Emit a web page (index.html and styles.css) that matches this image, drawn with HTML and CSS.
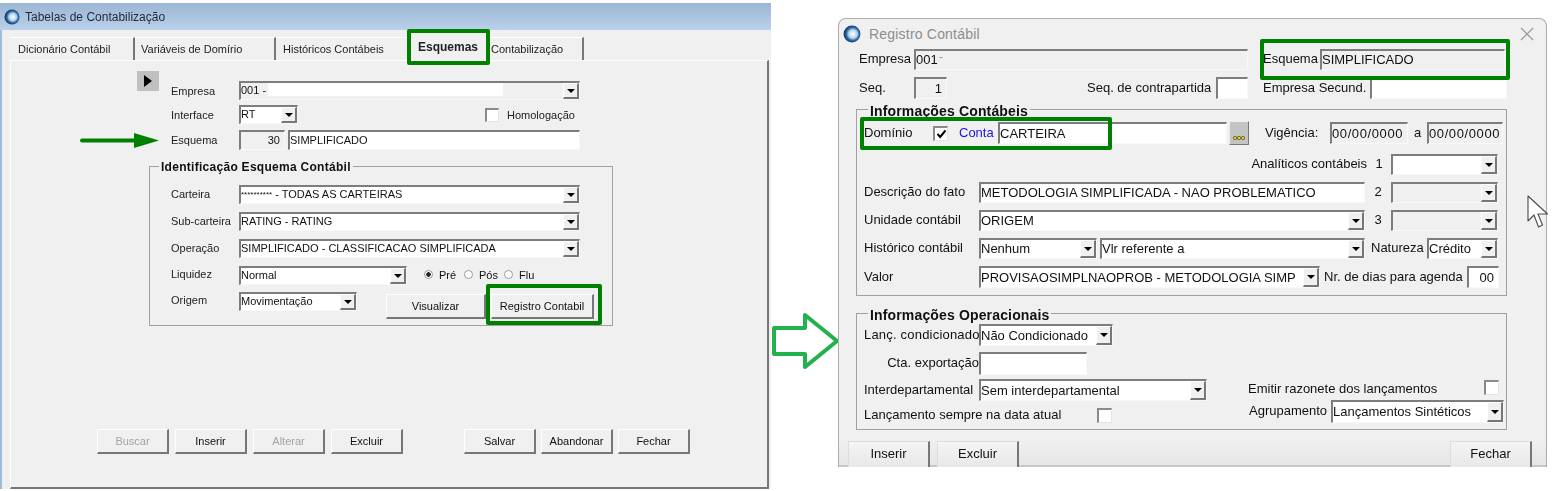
FILE: index.html
```html
<!DOCTYPE html>
<html lang="pt">
<head>
    <meta charset="UTF-8">
    <title>Tabelas de Contabilização</title>
    <link rel="stylesheet" href="styles.css">
</head>
<body>
    <svg width="0" height="0" class="defs">
        <defs>
            <radialGradient id="orb" cx="55%" cy="50%" r="55%">
                <stop offset="0" stop-color="#ffffff"/>
                <stop offset="0.45" stop-color="#b8d4ee"/>
                <stop offset="0.7" stop-color="#2a6aa8"/>
                <stop offset="1" stop-color="#0c2c58"/>
            </radialGradient>
        </defs>
    </svg>

    <!-- janela esquerda -->
    <div class="window tables">
        <div class="titlebar">
            <svg class="logo" width="16" height="16" viewBox="0 0 16 16"><circle cx="8" cy="8" r="7.5" fill="url(#orb)"/></svg>
            <span>Tabelas de Contabilização</span>
        </div>
        <div class="tabs">
            <div class="tab t1">Dicionário Contábil</div>
            <div class="tab t2">Variáveis de Domírio</div>
            <div class="tab t3">Históricos Contábeis</div>
            <div class="tab t4 selected">Esquemas</div>
            <div class="tab t5">Contabilização</div>
        </div>
        <div class="panel">
            <div class="play"><svg width="8" height="12" viewBox="0 0 8 12"><path d="M0 0 L8 6 L0 12 Z" fill="#000"/></svg></div>
            <div class="scheme">
                <div class="row r1">
                    <label class="lab">Empresa</label>
                    <div class="field f341 off">001 -<span class="redact"></span><span class="arrow"></span></div>
                </div>
                <div class="row r2">
                    <label class="lab">Interface</label>
                    <div class="field f59">RT<span class="arrow"></span></div>
                    <div class="check ck-homolog"></div>
                    <label class="homolog">Homologação</label>
                </div>
                <div class="row r3">
                    <label class="lab">Esquema</label>
                    <div class="field f46 off num-right">30</div>
                    <div class="field f292">SIMPLIFICADO</div>
                </div>
            </div>
            <fieldset class="group id-group">
                <legend>Identificação Esquema Contábil</legend>
                <div class="row">
                    <label class="lab">Carteira</label>
                    <div class="field f341"><span class="stars">**********</span>&nbsp;- TODAS AS CARTEIRAS<span class="arrow"></span></div>
                </div>
                <div class="row">
                    <label class="lab">Sub-carteira</label>
                    <div class="field f341">RATING - RATING<span class="arrow"></span></div>
                </div>
                <div class="row">
                    <label class="lab">Operação</label>
                    <div class="field f341">SIMPLIFICADO - CLASSIFICACAO SIMPLIFICADA<span class="arrow"></span></div>
                </div>
                <div class="row tight">
                    <label class="lab">Liquidez</label>
                    <div class="field f168">Normal<span class="arrow"></span></div>
                    <span class="radio on first"></span><label class="rlab">Pré</label>
                    <span class="radio"></span><label class="rlab">Pós</label>
                    <span class="radio"></span><label class="rlab">Flu</label>
                </div>
                <div class="row tight">
                    <label class="lab">Origem</label>
                    <div class="field f118">Movimentação<span class="arrow"></span></div>
                    <div class="btn visualizar">Visualizar</div>
                    <div class="btn registro">Registro Contabil</div>
                </div>
            </fieldset>
            <div class="actions">
                <div class="btn off">Buscar</div>
                <div class="btn">Inserir</div>
                <div class="btn off">Alterar</div>
                <div class="btn">Excluir</div>
                <div class="btn salvar">Salvar</div>
                <div class="btn">Abandonar</div>
                <div class="btn">Fechar</div>
            </div>
        </div>
    </div>

    <div class="mark mark-tab"></div>
    <div class="mark mark-registro"></div>
    <svg class="pointer" width="80" height="16" viewBox="0 0 80 16">
        <path d="M2 7.5 H55" stroke="#008000" stroke-width="4" stroke-linecap="round"/>
        <path d="M54 0 L79 7.5 L54 15 Z" fill="#008000"/>
    </svg>
    <svg class="big-arrow" width="68" height="56" viewBox="0 0 68 56">
        <path d="M2 15 H33 V2 L65 28 L33 54 V41 H2 Z" fill="#fff" stroke="#22b14c" stroke-width="4" stroke-linejoin="round"/>
    </svg>

    <!-- janela direita -->
    <div class="window record">
        <div class="rec-title">
            <svg class="logo" width="18" height="18" viewBox="0 0 16 16"><circle cx="8" cy="8" r="7.5" fill="url(#orb)"/></svg>
            <span>Registro Contábil</span>
            <svg class="close" width="14" height="14" viewBox="0 0 14 14"><path d="M1 1 L13 13 M13 1 L1 13" stroke="#9a9a9a" stroke-width="1.2"/></svg>
        </div>
        <div class="rec-body">
            <div class="rrow top first-top">
                <label class="w55">Empresa</label>
                <div class="field w334 off">001<span class="faint">-</span></div>
                <label class="w57 ml15">Esquema</label>
                <div class="field w185 off">SIMPLIFICADO</div>
            </div>
            <div class="rrow top second-top">
                <label class="w55">Seq.</label>
                <div class="field w33 off num-right">1</div>
                <label class="w129 ml140">Seq. de contrapartida</label>
                <div class="field w32"></div>
                <label class="w107 ml15">Empresa Secund.</label>
                <div class="field w137"></div>
            </div>
            <fieldset class="group rgroup accounting">
                <legend>Informações Contábeis</legend>
                <div class="rrow dominio">
                    <label class="w69">Domínio</label>
                    <div class="check on"><svg width="11" height="10" viewBox="0 0 11 10"><path d="M1.5 5 L4.2 8 L9.5 1.5" fill="none" stroke="#000" stroke-width="2"/></svg></div>
                    <label class="conta">Conta</label>
                    <div class="field w229">CARTEIRA</div>
                    <div class="browse"><svg width="12" height="4" viewBox="0 0 12 4"><circle cx="2" cy="2" r="1.7" fill="#e8d800" stroke="#333" stroke-width=".6"/><circle cx="6" cy="2" r="1.7" fill="#e8d800" stroke="#333" stroke-width=".6"/><circle cx="10" cy="2" r="1.7" fill="#e8d800" stroke="#333" stroke-width=".6"/></svg></div>
                    <label class="w65 ml16">Vigência:</label>
                    <div class="field w78 off date">00/00/0000</div>
                    <label class="w19 center">a</label>
                    <div class="field w76 off date">00/00/0000</div>
                </div>
                <div class="rrow analiticos">
                    <label class="grow right">Analíticos contábeis</label>
                    <label class="w24 center">1</label>
                    <div class="field w107"><span class="arrow"></span></div>
                </div>
                <div class="rrow">
                    <label class="w115">Descrição do fato</label>
                    <div class="field w386">METODOLOGIA SIMPLIFICADA - NAO PROBLEMATICO</div>
                    <label class="w26 center">2</label>
                    <div class="field w107 off"><span class="arrow"></span></div>
                </div>
                <div class="rrow">
                    <label class="w115">Unidade contábil</label>
                    <div class="field w386">ORIGEM<span class="arrow"></span></div>
                    <label class="w26 center">3</label>
                    <div class="field w107 off"><span class="arrow"></span></div>
                </div>
                <div class="rrow">
                    <label class="w115">Histórico contábil</label>
                    <div class="field w118">Nenhum<span class="arrow"></span></div>
                    <div class="field w265 ml3">Vlr referente a<span class="arrow"></span></div>
                    <label class="w56 ml6">Natureza</label>
                    <div class="field w71">Crédito<span class="arrow"></span></div>
                </div>
                <div class="rrow valor">
                    <label class="w115">Valor</label>
                    <div class="field w341">PROVISAOSIMPLNAOPROB - METODOLOGIA SIMP<span class="arrow"></span></div>
                    <label class="w139 ml4">Nr. de dias para agenda</label>
                    <div class="field w32 ml4 num-right">00</div>
                </div>
            </fieldset>
            <fieldset class="group rgroup operational">
                <legend>Informações Operacionais</legend>
                <div class="rrow">
                    <label class="w115 cond">Lanç. condicionado</label>
                    <div class="field w134">Não Condicionado<span class="arrow"></span></div>
                </div>
                <div class="rrow cta">
                    <label class="w115 right">Cta. exportação</label>
                    <div class="field w108"></div>
                </div>
                <div class="rrow inter">
                    <label class="w115">Interdepartamental</label>
                    <div class="field w228">Sem interdepartamental<span class="arrow"></span></div>
                    <div class="emitir">
                        <label class="w236 ml41">Emitir razonete dos lançamentos</label>
                        <div class="check"></div>
                    </div>
                </div>
                <div class="rrow last">
                    <div class="sempre">
                        <label class="w233">Lançamento sempre na data atual</label>
                        <div class="check"></div>
                    </div>
                    <label class="w82 ml137 agrup">Agrupamento</label>
                    <div class="field w173">Lançamentos Sintéticos<span class="arrow"></span></div>
                </div>
            </fieldset>
        </div>
        <div class="rec-foot">
            <div class="fbtn">Inserir</div>
            <div class="fbtn">Excluir</div>
            <div class="fbtn fechar">Fechar</div>
        </div>
    </div>

    <div class="mark mark-esquema"></div>
    <div class="mark mark-conta"></div>
    <svg class="cursor" width="22" height="34" viewBox="0 0 22 34">
        <path d="M1 1 V26 L7 20 L11.5 32 L15.5 30 L11 19 L20.5 19 Z" fill="#fff" stroke="#4a4a4a" stroke-width="1.1" stroke-linejoin="round"/>
    </svg>
</body>
</html>
```

FILE: styles.css
```css
* { box-sizing: border-box; }
body {
    margin: 0;
    width: 1555px;
    height: 491px;
    position: relative;
    overflow: hidden;
    background: #fff;
    font-family: "Liberation Sans", Arial, sans-serif;
    font-size: 11px;
    color: #111;
}
label { white-space: nowrap; }
.defs { position: absolute; }

.window { position: absolute; background: #f0f0f0; filter: blur(.3px); }

/* Tabelas de Contabilização */
.tables {
    left: 0;
    top: 3px;
    width: 771px;
    height: 486px;
    border-left: 2px solid #9fbcdc;
    display: flex;
    flex-direction: column;
}
.titlebar {
    height: 27px;
    margin-left: -2px;
    padding-left: 4px;
    display: flex;
    align-items: center;
    gap: 5px;
    background: linear-gradient(#9cb5d3, #b9d1ea);
    color: #1c2a3a;
    font-size: 12px;
}
.tabs {
    height: 30px;
    padding: 7px 0 0 8px;
    display: flex;
    flex: none;
}
.tab {
    height: 23px;
    border-top: 1px solid #fff;
    border-right: 2px solid #777;
    padding-top: 5px;
    color: #222;
    white-space: nowrap;
}
.t1 { width: 125px; padding-left: 8px; }
.t2 { width: 141px; padding-left: 6px; }
.t3 { width: 132px; padding-left: 7px; border-right: none; }
.t4 { width: 82px; margin-top: -6px; height: 29px; padding: 9px 0 0 10px; font-size: 12px; font-weight: bold; border: none; }
.t5 { width: 94px; padding-left: 1px; }

.panel {
    flex: 1;
    margin-left: 8px;
    width: 759px;
    position: relative;
    border-top: 1px solid #fff;
    border-left: 1px solid #fff;
    border-right: 2px solid #777;
    border-bottom: 2px solid #777;
    display: flex;
    flex-direction: column;
}
.play {
    position: absolute;
    left: 126px;
    top: 10px;
    width: 22px;
    height: 20px;
    background: #c0c0c0;
    display: flex;
    align-items: center;
    justify-content: center;
}
.scheme { padding: 20px 0 0 160px; }

.row { display: flex; align-items: center; height: 19px; }
.r2 { margin-top: 5px; }
.r3 { margin-top: 6px; height: 20px; }
.lab { width: 68px; color: #222; }
.homolog { margin-left: 8px; color: #222; }

.field {
    position: relative;
    height: 100%;
    flex: none;
    padding: 0 0 2px;
    display: flex;
    align-items: center;
    white-space: nowrap;
    overflow: hidden;
    background: #fff;
    border-top: 2px solid #7d7d7d;
    border-left: 2px solid #7d7d7d;
    border-right: 1px solid #f8f8f8;
    border-bottom: 1px solid #f8f8f8;
}
.field.off { background: #f0f0f0; }
.num-right { justify-content: flex-end; padding-right: 4px; }
.redact {
    position: absolute;
    left: 27px;
    top: 0;
    width: 235px;
    height: 13px;
    background: #fff;
}
.arrow {
    position: absolute;
    right: 0;
    top: 0;
    bottom: 0;
    width: 16px;
    background: #f0f0f0;
    border-right: 2px solid #777;
    border-bottom: 2px solid #777;
    border-top: 1px solid #fff;
    border-left: 1px solid #fff;
}
.arrow::after {
    content: "";
    position: absolute;
    left: 50%;
    top: 50%;
    margin: -2px 0 0 -4px;
    border: 4px solid transparent;
    border-top: 4px solid #000;
    border-bottom: none;
}
.f341 { width: 341px; }
.f59 { width: 59px; }
.f46 { width: 46px; }
.f292 { width: 292px; margin-left: 3px; }
.f168 { width: 168px; }
.f118 { width: 118px; }
.stars { font-size: 8px; }

.check {
    width: 15px;
    height: 15px;
    flex: none;
    background: #fff;
    border-top: 2px solid #8a8a8a;
    border-left: 2px solid #8a8a8a;
    border-right: 1px solid #e4e4e4;
    border-bottom: 1px solid #e4e4e4;
    display: flex;
    align-items: center;
    justify-content: center;
}
.ck-homolog { margin-left: 187px; width: 14px; height: 14px; }

.group {
    margin: 0;
    border: 1px solid #a0a0a0;
    min-width: 0;
}
.group legend { font-weight: bold; padding: 0 2px; color: #111; }
.id-group {
    margin: 9px 0 0 138px;
    width: 464px;
    height: 167px;
    padding: 12px 0 0 10px;
}
.id-group legend { height: 14px; line-height: 14px; font-size: 12px; letter-spacing: .28px; position: relative; top: 1px; margin-left: -1px; }
.id-group .row { margin-bottom: 8px; padding-left: 11px; }
.id-group .row.tight { margin-bottom: 7px; align-items: flex-start; }
.radio {
    width: 9px;
    height: 9px;
    border-radius: 50%;
    border: 1px solid #999;
    background: #fff;
    margin: 4px 4px 0 0;
    flex: none;
}
.radio.first { margin-left: 17px; }
.radio.on { background: radial-gradient(circle, #222 0 2px, #fff 2.5px); }
.rlab { width: 27px; margin-top: 1px; padding-left: 2px; }
.rlab:last-child { width: auto; }
.id-group .lab, .rlab { line-height: 17px; }

.btn {
    width: 72px;
    height: 25px;
    flex: none;
    display: flex;
    align-items: center;
    justify-content: center;
    background: #f0f0f0;
    border-top: 1px solid #fff;
    border-left: 1px solid #fff;
    border-right: 2px solid #777;
    border-bottom: 2px solid #777;
    color: #111;
}
.btn.off { color: #a3a3a3; }
.btn.visualizar { width: 100px; margin: 2px 0 0 29px; }
.btn.registro { width: 103px; margin: 2px 0 0 5px; }
.actions {
    margin: auto 0 33px 86px;
    display: flex;
    gap: 6px;
}
.actions .btn:nth-child(n+6) { margin-left: -1px; }
.btn.salvar { margin-left: 55px; }

/* marcações verdes */
.mark {
    position: absolute;
    border: 4px solid #008000;
    border-radius: 2px;
}
.mark-tab { left: 407px; top: 29px; width: 83px; height: 36px; }
.mark-registro { left: 486px; top: 284px; width: 116px; height: 41px; }
.mark-esquema { left: 1260px; top: 39px; width: 250px; height: 41px; }
.mark-conta { left: 860px; top: 117px; width: 252px; height: 33px; }
.pointer { position: absolute; left: 80px; top: 133px; }
.big-arrow { position: absolute; left: 772px; top: 313px; }
.cursor { position: absolute; left: 1527px; top: 195px; }

/* Registro Contábil */
.record {
    left: 838px;
    top: 18px;
    width: 709px;
    height: 449px;
    border: 1px solid #acacac;
    border-bottom: none;
    border-radius: 8px 8px 0 0;
    display: flex;
    flex-direction: column;
    font-size: 13px;
}
.record label { padding-bottom: 2px; }
.record .field { padding-bottom: 1px; }
.rec-title {
    height: 30px;
    flex: none;
    padding-left: 4px;
    display: flex;
    align-items: center;
    gap: 8px;
    color: #8d8d8d;
    font-size: 14px;
    letter-spacing: .2px;
}
.close { margin-left: auto; margin-right: 12px; }
.rec-body { padding-left: 17px; flex: 1; }
.rrow { display: flex; align-items: center; height: 21px; }
.rrow.top .field { height: 100%; }
.first-top { padding-left: 3px; }
.second-top { padding-left: 3px; height: 22px; margin-top: 7px; }
.rgroup { width: 651px; padding: 5px 0 0 7px; }
.rgroup legend { height: 16px; line-height: 16px; margin-left: 4px; font-size: 14px; letter-spacing: .15px; position: relative; top: 2px; }
.accounting { margin-top: 2px; height: 195px; }
.operational { margin-top: 9px; height: 125px; padding-top: 3px; }
.accounting .rrow { margin-bottom: 7px; }
.rrow.dominio { height: 22px; margin-bottom: 10px; }
.rrow.analiticos { width: 634px; }
.rrow.valor { height: 22px; margin-bottom: 0; }
.operational .rrow { height: 22px; margin-bottom: 6px; }
.operational .rrow.inter { margin-bottom: 0; }
.rrow.cta { height: 23px; margin-bottom: 4px; }
.emitir { display: flex; align-items: flex-start; height: 100%; padding-top: 1px; }
.emitir label { line-height: 18px; }
.rrow.last { align-items: flex-start; height: 22px; }
.rrow.last .field { height: 23px; margin-top: -1px; }
.agrup { margin-top: 2px; }
.sempre { display: flex; align-items: center; margin-top: 6px; height: 16px; }
.cond { letter-spacing: .2px; }
.date { letter-spacing: .6px; }
.conta { width: 39px; margin-left: 11px; color: #1414e6; }
.browse {
    width: 20px;
    height: 24px;
    margin-left: 2px;
    flex: none;
    background: #c4c4c4;
    border-top: 1px solid #eee;
    border-left: 1px solid #eee;
    border-right: 1px solid #777;
    border-bottom: 1px solid #777;
    display: flex;
    align-items: flex-end;
    justify-content: center;
    padding-bottom: 4px;
}
.grow { flex: 1; }
.right { text-align: right; }
.center { text-align: center; }
.w19 { width: 19px; } .w24 { width: 24px; } .w26 { width: 26px; }
.w32 { width: 32px; } .w33 { width: 33px; } .w55 { width: 55px; }
.w56 { width: 56px; } .w57 { width: 57px; } .w65 { width: 65px; }
.w69 { width: 69px; } .w71 { width: 71px; } .w76 { width: 76px; }
.w78 { width: 78px; } .w82 { width: 82px; } .w107 { width: 107px; }
.w108 { width: 108px; } .w115 { width: 115px; } .w118 { width: 118px; }
.w129 { width: 129px; } .w134 { width: 134px; } .w137 { width: 137px; }
.w139 { width: 139px; } .w173 { width: 173px; } .w185 { width: 185px; }
.w228 { width: 228px; } .w229 { width: 229px; } .w233 { width: 233px; }
.w236 { width: 236px; } .w265 { width: 265px; } .w334 { width: 334px; }
.w341 { width: 341px; } .w386 { width: 386px; }
.ml3 { margin-left: 3px; } .ml4 { margin-left: 4px; } .ml6 { margin-left: 6px; }
.ml15 { margin-left: 15px; } .ml16 { margin-left: 16px; } .ml41 { margin-left: 41px; }
.ml137 { margin-left: 137px; } .ml140 { margin-left: 140px; }
.faint { color: #999; margin-left: 1px; margin-top: -6px; }
.rec-foot {
    height: 29px;
    flex: none;
    padding: 3px 14px 0 9px;
    display: flex;
    gap: 7px;
    background: linear-gradient(#f0f0f0, #e6e6e6);
    border-bottom: 2px solid #c8c8c8;
}
.fbtn {
    width: 82px;
    height: 26px;
    padding-bottom: 2px;
    display: flex;
    align-items: center;
    justify-content: center;
    background: linear-gradient(#f4f4f4, #e8e8e8);
    border-top: 1px solid #ddd;
    border-left: 1px solid #ddd;
    border-right: 2px solid #777;
}
.fechar { margin-left: auto; }
```
